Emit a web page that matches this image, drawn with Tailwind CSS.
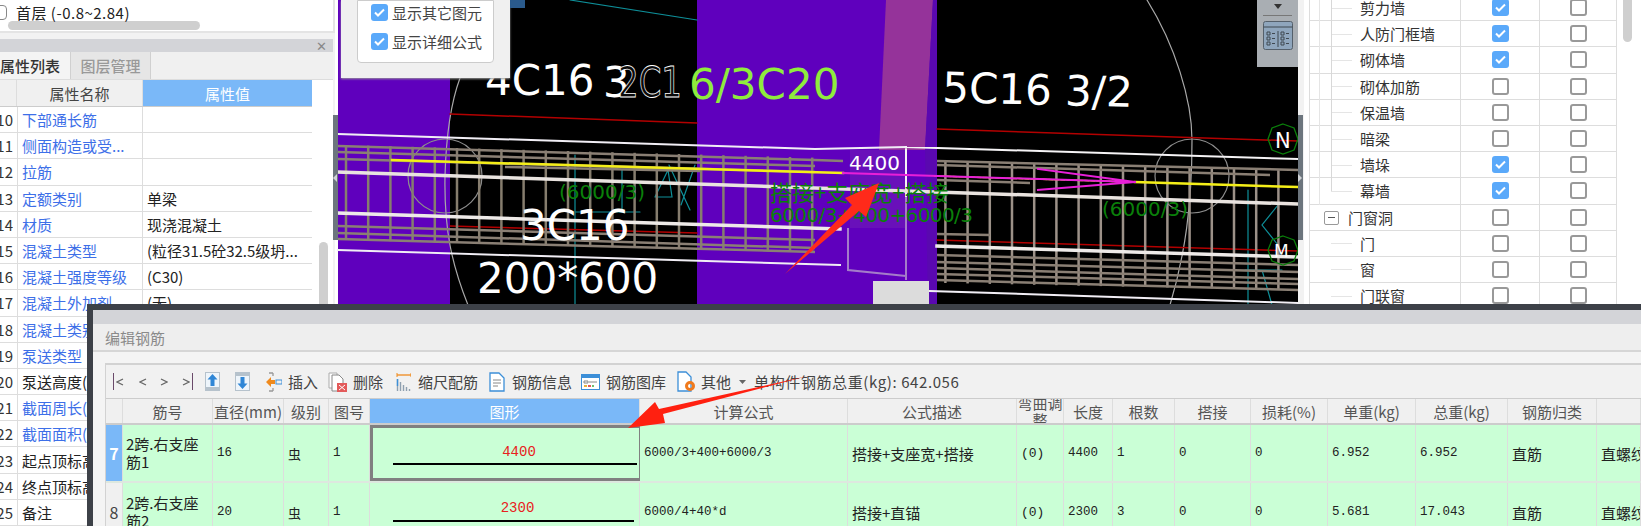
<!DOCTYPE html>
<html lang="zh">
<head>
<meta charset="UTF-8">
<title>编辑钢筋</title>
<script src="https://cdn.jsdelivr.net/npm/@tailwindcss/browser@4"></script>
</head>
<body class="bg-white">
<div class="relative flex w-[1641px] h-[526px] overflow-hidden bg-[#f2f2f2] text-[15px] leading-none text-[#333] font-['Noto_Sans_CJK_SC','Noto_Sans',sans-serif]">

  <!-- 左侧面板 -->
  <div class="w-[335px] shrink-0 flex flex-col">
    <div class="relative h-[35px] bg-white border-r-2 border-b-2 border-[#e4e4e4]">
      <div class="flex items-center h-[24px] -ml-[8px] gap-[9px]">
        <span class="w-[15px] h-[15px] border border-[#888] rounded-sm"></span>
        <span class="text-[#222] whitespace-nowrap tracking-[0.5px]">首层 (-0.8~2.84)</span>
      </div>
      <div class="-mt-[3px] ml-[8px] w-[192px] h-[9px] rounded-full bg-[#cfcfcf]"></div>
    </div>
    <div class="h-[6px]"></div>
    <div class="h-[14px] bg-[#d3d4d8] flex items-center justify-end pr-[6px] mr-[2px] text-[#888] text-[13px]">✕</div>
    <div class="flex h-[29px] mr-[2px] bg-[#f0f0f0] border-b border-[#ddd]">
      <div class="w-[70px] flex items-center justify-end pr-[10px] bg-[#f4f4f4] text-[#333] font-medium whitespace-nowrap">属性列表</div>
      <div class="w-[81px] flex items-center justify-center bg-[#e6e6e6] border-x border-[#d0d0d0] text-[#999] font-medium">图层管理</div>
    </div>
    <div class="relative flex-1 bg-white mr-[2px]">
      <div class="flex h-[27px] bg-[#f0f0f0] w-[312px] border-b border-[#ccc]">
        <div class="w-[17px] border-r border-[#ddd]"></div>
        <div class="w-[126px] flex items-center justify-center border-r border-[#ddd] text-[#444]">属性名称</div>
        <div class="flex-1 flex items-center justify-center bg-[#7ab8f8] text-white">属性值</div>
      </div>
      <div class="w-[312px] text-[#3d6fe8]">
        <div class="flex h-[26.2px] items-center border-b border-[#ddd]"><span class="w-[13px] text-right text-[#333] overflow-hidden whitespace-nowrap [direction:rtl]">10</span><span class="w-[4px] self-stretch"></span><span class="w-[126px] self-stretch flex items-center pl-[4px] border-x border-[#ddd]">下部通长筋</span><span class="pl-[4px] text-[#222]"></span></div>
        <div class="flex h-[26.2px] items-center border-b border-[#ddd]"><span class="w-[13px] text-right text-[#333] overflow-hidden whitespace-nowrap [direction:rtl]">11</span><span class="w-[4px] self-stretch"></span><span class="w-[126px] self-stretch flex items-center pl-[4px] border-x border-[#ddd]">侧面构造或受...</span><span class="pl-[4px] text-[#222]"></span></div>
        <div class="flex h-[26.2px] items-center border-b border-[#ddd]"><span class="w-[13px] text-right text-[#333] overflow-hidden whitespace-nowrap [direction:rtl]">12</span><span class="w-[4px] self-stretch"></span><span class="w-[126px] self-stretch flex items-center pl-[4px] border-x border-[#ddd]">拉筋</span><span class="pl-[4px] text-[#222]"></span></div>
        <div class="flex h-[26.2px] items-center border-b border-[#ddd]"><span class="w-[13px] text-right text-[#333] overflow-hidden whitespace-nowrap [direction:rtl]">13</span><span class="w-[4px] self-stretch"></span><span class="w-[126px] self-stretch flex items-center pl-[4px] border-x border-[#ddd]">定额类别</span><span class="pl-[4px] text-[#222]">单梁</span></div>
        <div class="flex h-[26.2px] items-center border-b border-[#ddd]"><span class="w-[13px] text-right text-[#333] overflow-hidden whitespace-nowrap [direction:rtl]">14</span><span class="w-[4px] self-stretch"></span><span class="w-[126px] self-stretch flex items-center pl-[4px] border-x border-[#ddd]">材质</span><span class="pl-[4px] text-[#222]">现浇混凝土</span></div>
        <div class="flex h-[26.2px] items-center border-b border-[#ddd]"><span class="w-[13px] text-right text-[#333] overflow-hidden whitespace-nowrap [direction:rtl]">15</span><span class="w-[4px] self-stretch"></span><span class="w-[126px] self-stretch flex items-center pl-[4px] border-x border-[#ddd]">混凝土类型</span><span class="pl-[4px] text-[#222] whitespace-nowrap">(粒径31.5砼32.5级坍...</span></div>
        <div class="flex h-[26.2px] items-center border-b border-[#ddd]"><span class="w-[13px] text-right text-[#333] overflow-hidden whitespace-nowrap [direction:rtl]">16</span><span class="w-[4px] self-stretch"></span><span class="w-[126px] self-stretch flex items-center pl-[4px] border-x border-[#ddd]">混凝土强度等级</span><span class="pl-[4px] text-[#222]">(C30)</span></div>
        <div class="flex h-[26.2px] items-center border-b border-[#ddd]"><span class="w-[13px] text-right text-[#333] overflow-hidden whitespace-nowrap [direction:rtl]">17</span><span class="w-[4px] self-stretch"></span><span class="w-[126px] self-stretch flex items-center pl-[4px] border-x border-[#ddd]">混凝土外加剂</span><span class="pl-[4px] text-[#222]">(无)</span></div>
        <div class="flex h-[26.2px] items-center border-b border-[#ddd]"><span class="w-[13px] text-right text-[#333] overflow-hidden whitespace-nowrap [direction:rtl]">18</span><span class="w-[4px] self-stretch"></span><span class="w-[126px] self-stretch flex items-center pl-[4px] border-x border-[#ddd]">混凝土类别</span></div>
        <div class="flex h-[26.2px] items-center border-b border-[#ddd]"><span class="w-[13px] text-right text-[#333] overflow-hidden whitespace-nowrap [direction:rtl]">19</span><span class="w-[4px] self-stretch"></span><span class="w-[126px] self-stretch flex items-center pl-[4px] border-x border-[#ddd]">泵送类型</span></div>
        <div class="flex h-[26.2px] items-center border-b border-[#ddd]"><span class="w-[13px] text-right text-[#333] overflow-hidden whitespace-nowrap [direction:rtl]">20</span><span class="w-[4px] self-stretch"></span><span class="w-[126px] self-stretch flex items-center pl-[4px] border-x border-[#ddd] text-[#222] whitespace-nowrap">泵送高度(m)</span></div>
        <div class="flex h-[26.2px] items-center border-b border-[#ddd]"><span class="w-[13px] text-right text-[#333] overflow-hidden whitespace-nowrap [direction:rtl]">21</span><span class="w-[4px] self-stretch"></span><span class="w-[126px] self-stretch flex items-center pl-[4px] border-x border-[#ddd] whitespace-nowrap">截面周长(m)</span></div>
        <div class="flex h-[26.2px] items-center border-b border-[#ddd]"><span class="w-[13px] text-right text-[#333] overflow-hidden whitespace-nowrap [direction:rtl]">22</span><span class="w-[4px] self-stretch"></span><span class="w-[126px] self-stretch flex items-center pl-[4px] border-x border-[#ddd] whitespace-nowrap">截面面积(m²)</span></div>
        <div class="flex h-[26.2px] items-center border-b border-[#ddd]"><span class="w-[13px] text-right text-[#333] overflow-hidden whitespace-nowrap [direction:rtl]">23</span><span class="w-[4px] self-stretch"></span><span class="w-[126px] self-stretch flex items-center pl-[4px] border-x border-[#ddd] text-[#222] whitespace-nowrap">起点顶标高(m)</span></div>
        <div class="flex h-[26.2px] items-center border-b border-[#ddd]"><span class="w-[13px] text-right text-[#333] overflow-hidden whitespace-nowrap [direction:rtl]">24</span><span class="w-[4px] self-stretch"></span><span class="w-[126px] self-stretch flex items-center pl-[4px] border-x border-[#ddd] text-[#222] whitespace-nowrap">终点顶标高(m)</span></div>
        <div class="flex h-[26.2px] items-center border-b border-[#ddd]"><span class="w-[13px] text-right text-[#333] overflow-hidden whitespace-nowrap [direction:rtl]">25</span><span class="w-[4px] self-stretch"></span><span class="w-[126px] self-stretch flex items-center pl-[4px] border-x border-[#ddd] text-[#222]">备注</span></div>
      </div>
      <div class="absolute left-[319px] top-[162px] w-[9px] h-[200px] rounded-full bg-[#cfcfcf]"></div>
    </div>
  </div>

  <!-- 绘图区 -->
  <div class="relative w-[963px] shrink-0 bg-black">
    <svg width="963" height="305" viewBox="335 0 963 305" class="block font-['DejaVu_Sans',sans-serif]">
      <rect x="335" y="0" width="3" height="305" fill="#fff"/>
      <rect x="338" y="0" width="112" height="305" fill="#5f00bd"/>
      <rect x="697" y="0" width="240" height="305" fill="#5f00bd"/>
      <polygon points="886,0 933,0 925,150 879,150" fill="#95339a"/>
      <polygon points="933,0 937,0 937,305 928,305 925,150" fill="#5a08b0"/>
      <rect x="850" y="150" width="56" height="78" fill="#7420b8" opacity=".5"/>
      <g fill="none" stroke-linecap="round">
        <path d="M460 78C450 105 446 140 445 176C444 230 452 265 468 305" stroke="#a9a9a9" stroke-width="1.2"/>
        <path d="M1147 0C1175 45 1192 100 1192 140C1192 205 1185 255 1170 305" stroke="#a9a9a9" stroke-width="1.2"/>
        <circle cx="445" cy="176" r="37" stroke="#8d8d8d" stroke-width="1.2"/>
        <circle cx="1192" cy="176" r="37" stroke="#8d8d8d" stroke-width="1.2"/>
        <path d="M570 0L697 20M575 155V305M590 156V212M575 212H640M622 170V212M655 197H672L668 170L655 197M669 165L690 210M695 165L681 205M1248 190V305M1278 205L1262 225L1278 245M1245 270H1282M1262 270L1272 305" stroke="#0e8f99" stroke-width="1.2"/>
        <path d="M450 114L697 123M937 129L1298 141M450 226L697 233M937 240L1298 251" stroke="#b30000" stroke-width="1.5"/>
      </g>
      <g id="stirrups" stroke-width="2.5"></g>
      <g fill="none" stroke="#8a7f74" stroke-width="2.5">
        <path d="M338 146L815 160M338 152L815 166M338 159L815 172M505 167L700 171M338 226L815 240M338 233L815 248M338 239L815 252M815 160L843 161"/>
        <path d="M937 161L1298 170M937 165L1270 175M937 180L1030 183M937 234L990 235M937 255L1298 265M937 262L1298 272M937 268L1298 279M937 274L1298 284M937 280L1298 290"/>
        <path d="M848 228V270L906 276M906 195V280" stroke="#a47cc9" stroke-width="2"/>
      </g>
      <g fill="none" stroke-linecap="square">
        <path d="M338 134L815 149L906 147" stroke="#f1eef5" stroke-width="2"/>
        <path d="M906 147L1298 159M906 147V196" stroke="#f5f3f5" stroke-width="2"/>
        <path d="M338 172L1298 204" stroke="#e9e3df" stroke-width="3.5"/>
        <path d="M338 213L840 229M937 246L1298 257" stroke="#eeeae8" stroke-width="3.5"/>
        <path d="M338 250L840 265M930 291L1298 303" stroke="#f1eef5" stroke-width="2"/>
        <path d="M392 160L843 173" stroke="#f4ee18" stroke-width="2.5"/>
        <path d="M935 176L1130 182" stroke="#f4ee18" stroke-width="1.5" stroke-dasharray="4 2"/>
        <path d="M1135 182L1298 187" stroke="#f4ee18" stroke-width="2.5"/>
        <path d="M843 173L1135 182M1038 169L1135 182L1038 190" stroke="#e81fd8" stroke-width="2"/>
      </g>
      <rect x="873" y="281" width="56" height="24" fill="#dcdcdc"/>
      <text x="485" y="95" fill="#fff" font-size="42">4C16</text>
      <text x="603" y="97" fill="#fff" font-size="42">3</text>
      <text x="618" y="97" fill="#0a0a0a" stroke="#fff" stroke-width=".8" font-size="42" textLength="64" lengthAdjust="spacingAndGlyphs">2C1</text>
      <text x="689" y="99" fill="#8fec3c" font-size="42">6/3C20</text>
      <text x="942" y="102" fill="#fff" font-size="42" transform="rotate(1.5 942 102)">5C16 3/2</text>
      <text x="520" y="240" fill="#fff" font-size="42">3C16</text>
      <text x="477" y="293" fill="#fff" font-size="42">200*600</text>
      <text x="849" y="170" fill="#fff" font-size="20">4400</text>
      <text x="559" y="199" fill="#0a800a" font-size="20">(6000/3)</text>
      <text x="1102" y="216" fill="#0a800a" font-size="20">(6000/3)</text>
      <text x="770" y="201" fill="#0a800a" font-size="22" class="font-['Noto_Sans_CJK_SC',sans-serif]">搭接+支座宽+搭接</text>
      <text x="770" y="222" fill="#0a800a" font-size="20" textLength="203" lengthAdjust="spacing">6000/3+400+6000/3</text>
      <polygon points="1283,124 1294,128 1298,139 1294,150 1283,154 1272,150 1268,139 1272,128" fill="none" stroke="#0a800a" stroke-width="1.3"/>
      <text x="1275" y="148" fill="#fff" font-size="21">N</text>
      <polygon points="1283,236 1294,240 1298,250 1294,261 1283,265 1272,261 1268,250 1272,240" fill="none" stroke="#0a800a" stroke-width="1.3"/>
      <text x="1274" y="257" fill="#fff" font-size="17">M</text>
      <polygon points="785,274 852,205 845,198 879,183 866,217 859,211" fill="#ff2a1a"/>
    </svg>

    <!-- 显示选项弹窗 -->
    <div class="absolute left-[6px] top-0 w-[169px] h-[78px] bg-[#f0f0f0] shadow-[0_1px_2px_#999]">
      <div class="ml-[16px] w-[137px] h-[63px] bg-white border border-[#ccc] rounded-b-[4px] flex flex-col pl-[13px] pt-[3px] gap-[12px] text-[#444]">
        <div class="flex items-center gap-[4px] h-[17px]"><span class="w-[17px] h-[17px] rounded-[3px] bg-[#5aa9fa] flex items-center justify-center"><svg width="11" height="9" viewBox="0 0 11 9"><path d="M1 4.500L4 7.500L10 1.500" fill="none" stroke="#fff" stroke-width="2"/></svg></span><span class="whitespace-nowrap">显示其它图元</span></div>
        <div class="flex items-center gap-[4px] h-[17px]"><span class="w-[17px] h-[17px] rounded-[3px] bg-[#5aa9fa] flex items-center justify-center"><svg width="11" height="9" viewBox="0 0 11 9"><path d="M1 4.500L4 7.500L10 1.500" fill="none" stroke="#fff" stroke-width="2"/></svg></span><span class="whitespace-nowrap">显示详细公式</span></div>
      </div>
    </div>
    <div class="absolute left-[175px] top-0 w-[15px] h-[8px] bg-[#2a5a8c]"></div>

    <!-- 右上工具条 -->
    <div class="absolute right-0 top-0 w-[41px] h-[67px] bg-[#a9aeb3] flex flex-col items-center">
      <svg width="8" height="5" viewBox="0 0 8 5" class="mt-[4px]"><path d="M0 0H8L4 5Z" fill="#333"/></svg>
      <div class="w-[29px] h-px bg-[#777] mt-[6px]"></div>
      <svg width="30" height="29" viewBox="0 0 30 29" class="mt-[5px]">
        <rect x=".5" y=".5" width="29" height="28" rx="2" fill="#8fa6bd" stroke="#55606b"/>
        <path d="M.5 6H29.500M15 10V26" stroke="#3f4850"/>
        <path d="M4 11h3v3H4zM4 16h3v3H4zM4 21h3v3H4zM18 11h3v3h-3zM18 16h3v3h-3zM18 21h3v3h-3z" fill="none" stroke="#3f4850"/>
        <path d="M9 12.500h3M9 17.500h3M9 22.500h3M23 12.500h3M23 17.500h3M23 22.500h3" stroke="#3f4850"/>
      </svg>
    </div>

    <!-- 两侧拖动条 -->
    <div class="absolute -left-[2px] top-[115px] w-[5px] h-[125px] bg-[#6c757d] flex items-center"><svg width="4" height="8" viewBox="0 0 4 8"><path d="M4 0V8L0 4Z" fill="#cfd3d6"/></svg></div>
    <div class="absolute -right-[5px] top-[115px] z-10 w-[5px] h-[125px] bg-[#6c757d] flex items-center"><svg width="4" height="8" viewBox="0 0 4 8"><path d="M0 0V8L4 4Z" fill="#cfd3d6"/></svg></div>
  </div>

  <!-- 右侧面板 -->
  <div class="flex-1 relative bg-white pl-[5px] border-l-[6px] border-[#f2f2f2]">
    <div class="-mt-[5px] w-[308px] border-l border-[#ddd] text-[#333]">
      <div class="relative flex items-center h-[26.2px] border-b border-[#ddd]"><span class="absolute left-[21px] top-1/2 w-[21px] border-t border-[#e5e5e5]"></span><span class="w-[150px] pl-[50px] whitespace-nowrap">剪力墙</span><span class="w-[79px] h-full flex items-center justify-center border-l border-[#ddd]"><span class="w-[17px] h-[17px] rounded-[3px] bg-[#5aa9fa] flex items-center justify-center"><svg width="11" height="9" viewBox="0 0 11 9"><path d="M1 4.500L4 7.500L10 1.500" fill="none" stroke="#fff" stroke-width="2"/></svg></span></span><span class="w-[78px] h-full flex items-center justify-center border-x border-[#ddd]"><span class="w-[17px] h-[17px] rounded-[3px] border-2 border-[#999] bg-white"></span></span></div>
      <div class="relative flex items-center h-[26.2px] border-b border-[#ddd]"><span class="absolute left-[21px] top-1/2 w-[21px] border-t border-[#e5e5e5]"></span><span class="w-[150px] pl-[50px] whitespace-nowrap">人防门框墙</span><span class="w-[79px] h-full flex items-center justify-center border-l border-[#ddd]"><span class="w-[17px] h-[17px] rounded-[3px] bg-[#5aa9fa] flex items-center justify-center"><svg width="11" height="9" viewBox="0 0 11 9"><path d="M1 4.500L4 7.500L10 1.500" fill="none" stroke="#fff" stroke-width="2"/></svg></span></span><span class="w-[78px] h-full flex items-center justify-center border-x border-[#ddd]"><span class="w-[17px] h-[17px] rounded-[3px] border-2 border-[#999] bg-white"></span></span></div>
      <div class="relative flex items-center h-[26.2px] border-b border-[#ddd]"><span class="absolute left-[21px] top-1/2 w-[21px] border-t border-[#e5e5e5]"></span><span class="w-[150px] pl-[50px] whitespace-nowrap">砌体墙</span><span class="w-[79px] h-full flex items-center justify-center border-l border-[#ddd]"><span class="w-[17px] h-[17px] rounded-[3px] bg-[#5aa9fa] flex items-center justify-center"><svg width="11" height="9" viewBox="0 0 11 9"><path d="M1 4.500L4 7.500L10 1.500" fill="none" stroke="#fff" stroke-width="2"/></svg></span></span><span class="w-[78px] h-full flex items-center justify-center border-x border-[#ddd]"><span class="w-[17px] h-[17px] rounded-[3px] border-2 border-[#999] bg-white"></span></span></div>
      <div class="relative flex items-center h-[26.2px] border-b border-[#ddd]"><span class="absolute left-[21px] top-1/2 w-[21px] border-t border-[#e5e5e5]"></span><span class="w-[150px] pl-[50px] whitespace-nowrap">砌体加筋</span><span class="w-[79px] h-full flex items-center justify-center border-l border-[#ddd]"><span class="w-[17px] h-[17px] rounded-[3px] border-2 border-[#999] bg-white"></span></span><span class="w-[78px] h-full flex items-center justify-center border-x border-[#ddd]"><span class="w-[17px] h-[17px] rounded-[3px] border-2 border-[#999] bg-white"></span></span></div>
      <div class="relative flex items-center h-[26.2px] border-b border-[#ddd]"><span class="absolute left-[21px] top-1/2 w-[21px] border-t border-[#e5e5e5]"></span><span class="w-[150px] pl-[50px] whitespace-nowrap">保温墙</span><span class="w-[79px] h-full flex items-center justify-center border-l border-[#ddd]"><span class="w-[17px] h-[17px] rounded-[3px] border-2 border-[#999] bg-white"></span></span><span class="w-[78px] h-full flex items-center justify-center border-x border-[#ddd]"><span class="w-[17px] h-[17px] rounded-[3px] border-2 border-[#999] bg-white"></span></span></div>
      <div class="relative flex items-center h-[26.2px] border-b border-[#ddd]"><span class="absolute left-[21px] top-1/2 w-[21px] border-t border-[#e5e5e5]"></span><span class="w-[150px] pl-[50px] whitespace-nowrap">暗梁</span><span class="w-[79px] h-full flex items-center justify-center border-l border-[#ddd]"><span class="w-[17px] h-[17px] rounded-[3px] border-2 border-[#999] bg-white"></span></span><span class="w-[78px] h-full flex items-center justify-center border-x border-[#ddd]"><span class="w-[17px] h-[17px] rounded-[3px] border-2 border-[#999] bg-white"></span></span></div>
      <div class="relative flex items-center h-[26.2px] border-b border-[#ddd]"><span class="absolute left-[21px] top-1/2 w-[21px] border-t border-[#e5e5e5]"></span><span class="w-[150px] pl-[50px] whitespace-nowrap">墙垛</span><span class="w-[79px] h-full flex items-center justify-center border-l border-[#ddd]"><span class="w-[17px] h-[17px] rounded-[3px] bg-[#5aa9fa] flex items-center justify-center"><svg width="11" height="9" viewBox="0 0 11 9"><path d="M1 4.500L4 7.500L10 1.500" fill="none" stroke="#fff" stroke-width="2"/></svg></span></span><span class="w-[78px] h-full flex items-center justify-center border-x border-[#ddd]"><span class="w-[17px] h-[17px] rounded-[3px] border-2 border-[#999] bg-white"></span></span></div>
      <div class="relative flex items-center h-[26.2px] border-b border-[#ddd]"><span class="absolute left-[21px] top-1/2 w-[21px] border-t border-[#e5e5e5]"></span><span class="w-[150px] pl-[50px] whitespace-nowrap">幕墙</span><span class="w-[79px] h-full flex items-center justify-center border-l border-[#ddd]"><span class="w-[17px] h-[17px] rounded-[3px] bg-[#5aa9fa] flex items-center justify-center"><svg width="11" height="9" viewBox="0 0 11 9"><path d="M1 4.500L4 7.500L10 1.500" fill="none" stroke="#fff" stroke-width="2"/></svg></span></span><span class="w-[78px] h-full flex items-center justify-center border-x border-[#ddd]"><span class="w-[17px] h-[17px] rounded-[3px] border-2 border-[#999] bg-white"></span></span></div>
      <div class="relative flex items-center h-[26.2px] border-b border-[#ddd]"><span class="absolute left-[14px] top-[6px] w-[15px] h-[14px] border border-[#999] rounded-[2px] flex items-center justify-center"><span class="w-[7px] h-px bg-[#555]"></span></span><span class="w-[150px] pl-[38px] whitespace-nowrap">门窗洞</span><span class="w-[79px] h-full flex items-center justify-center border-l border-[#ddd]"><span class="w-[17px] h-[17px] rounded-[3px] border-2 border-[#999] bg-white"></span></span><span class="w-[78px] h-full flex items-center justify-center border-x border-[#ddd]"><span class="w-[17px] h-[17px] rounded-[3px] border-2 border-[#999] bg-white"></span></span></div>
      <div class="relative flex items-center h-[26.2px] border-b border-[#ddd]"><span class="absolute left-[21px] top-1/2 w-[21px] border-t border-[#e5e5e5]"></span><span class="w-[150px] pl-[50px] whitespace-nowrap">门</span><span class="w-[79px] h-full flex items-center justify-center border-l border-[#ddd]"><span class="w-[17px] h-[17px] rounded-[3px] border-2 border-[#999] bg-white"></span></span><span class="w-[78px] h-full flex items-center justify-center border-x border-[#ddd]"><span class="w-[17px] h-[17px] rounded-[3px] border-2 border-[#999] bg-white"></span></span></div>
      <div class="relative flex items-center h-[26.2px] border-b border-[#ddd]"><span class="absolute left-[21px] top-1/2 w-[21px] border-t border-[#e5e5e5]"></span><span class="w-[150px] pl-[50px] whitespace-nowrap">窗</span><span class="w-[79px] h-full flex items-center justify-center border-l border-[#ddd]"><span class="w-[17px] h-[17px] rounded-[3px] border-2 border-[#999] bg-white"></span></span><span class="w-[78px] h-full flex items-center justify-center border-x border-[#ddd]"><span class="w-[17px] h-[17px] rounded-[3px] border-2 border-[#999] bg-white"></span></span></div>
      <div class="relative flex items-center h-[26.2px] border-b border-[#ddd]"><span class="absolute left-[21px] top-1/2 w-[21px] border-t border-[#e5e5e5]"></span><span class="w-[150px] pl-[50px] whitespace-nowrap">门联窗</span><span class="w-[79px] h-full flex items-center justify-center border-l border-[#ddd]"><span class="w-[17px] h-[17px] rounded-[3px] border-2 border-[#999] bg-white"></span></span><span class="w-[78px] h-full flex items-center justify-center border-x border-[#ddd]"><span class="w-[17px] h-[17px] rounded-[3px] border-2 border-[#999] bg-white"></span></span></div>
    </div>
    <div class="absolute left-[15px] top-0 h-[205px] border-l border-[#e5e5e5]"></div>
    <div class="absolute left-[27px] top-0 h-[191px] border-l border-[#d8d8d8]"></div>
    <div class="absolute right-[9px] top-0 w-[9px] h-[42px] rounded-b-full bg-[#cfcfcf]"></div>
  </div>

  <!-- 编辑钢筋 对话框 -->
  <div class="absolute z-20 left-[87px] top-[304px] right-0 bottom-0 bg-[#f4f4f4] border-l-[6px] border-t-[6px] border-[#3d4148] flex flex-col">
    <div class="h-[14px] shrink-0 bg-[#d3d4d8]"></div>
    <div class="h-[28px] shrink-0 bg-[#eeeeee] border-b-2 border-[#d6d6d6] flex items-center pl-[12px] text-[#8a8a8a]">编辑钢筋</div>
    <div class="h-[11px] shrink-0"></div>
    <div class="flex-1 ml-[12px] border-l border-t-2 border-[#d2d2d2] bg-[#f1f1f1] min-h-0">
      <div class="h-[33px] flex items-center text-[#444] whitespace-nowrap">
        <span class="ml-[7px] w-[12px] flex items-center text-[#555]"><span class="w-px h-[17px] bg-[#6a4a6a] mr-[2px]"></span><svg width="8" height="8" viewBox="0 0 8 8"><path d="M7 1L1 4L7 7" fill="none" stroke="#666" stroke-width="1.300"/></svg></span>
        <svg width="8" height="8" viewBox="0 0 8 8" class="ml-[14px]"><path d="M7 1L1 4L7 7" fill="none" stroke="#666" stroke-width="1.300"/></svg>
        <svg width="8" height="8" viewBox="0 0 8 8" class="ml-[13px]"><path d="M1 1L7 4L1 7" fill="none" stroke="#666" stroke-width="1.300"/></svg>
        <span class="ml-[14px] flex items-center"><svg width="8" height="8" viewBox="0 0 8 8"><path d="M1 1L7 4L1 7" fill="none" stroke="#666" stroke-width="1.300"/></svg><span class="w-px h-[17px] bg-[#6a4a6a] ml-[2px]"></span></span>
        <svg width="15" height="19" viewBox="0 0 15 19" class="ml-[12px]"><rect width="15" height="19" fill="#b6c2cc"/><rect x="1" y="1" width="13" height="14" fill="#eef5fb"/><path d="M7.500 2L12.500 7.500H9.500V14H5.500V7.500H2.500Z" fill="#2f86d6"/></svg>
        <svg width="15" height="19" viewBox="0 0 15 19" class="ml-[15px]"><rect width="15" height="19" fill="#b6c2cc"/><rect x="1" y="4" width="13" height="14" fill="#eef5fb"/><path d="M7.500 17L12.500 11.500H9.500V5H5.500V11.500H2.500Z" fill="#2f86d6"/></svg>
        <svg width="17" height="20" viewBox="0 0 17 20" class="ml-[15px]"><path d="M4 1H8M8 1V4M4 19H8M8 19V16" fill="none" stroke="#999" stroke-width="1.300"/><path d="M1 10L6 5V8H10V12H6V15Z" fill="#f08a1d"/><rect x="11" y="8" width="6" height="4" fill="none" stroke="#3c8fd8"/></svg>
        <span class="ml-[6px]">插入</span>
        <svg width="19" height="20" viewBox="0 0 19 20" class="ml-[10px]"><path d="M1 1H9V16H1Z" fill="#fff" stroke="#aaa"/><path d="M4 3H11L15 7V19H4Z" fill="#fff" stroke="#888"/><rect x="9" y="11" width="10" height="9" fill="#e35a5a"/><path d="M11 13L17 18M17 13L11 18" stroke="#fff"/></svg>
        <span class="ml-[6px]">删除</span>
        <svg width="15" height="20" viewBox="0 0 15 20" class="ml-[13px]"><path d="M1 3H15" stroke="#f08a1d" stroke-width="1.300"/><path d="M1 1V5M15 1V5" stroke="#f08a1d"/><path d="M1.500 7V19M4.500 10V19M7.500 13V19M10.500 15V19M13.500 17V19" stroke="#8fa0b0" stroke-width="1.400"/><path d="M1.500 7V14" stroke="#3c8fd8" stroke-width="1.400"/></svg>
        <span class="ml-[7px]">缩尺配筋</span>
        <svg width="16" height="20" viewBox="0 0 16 20" class="ml-[11px]"><path d="M1 1H10L15 6V19H1Z" fill="#fff" stroke="#3c8fd8" stroke-width="1.300"/><path d="M4 8H12M4 11H12M4 14H9" stroke="#888"/></svg>
        <span class="ml-[7px]">钢筋信息</span>
        <svg width="19" height="16" viewBox="0 0 19 16" class="ml-[9px]"><rect x=".5" y=".5" width="18" height="15" fill="#fff" stroke="#3c8fd8"/><rect x="1" y="1" width="17" height="3" fill="#3c8fd8"/><path d="M3 7H7V9H3ZM8 8H16" fill="none" stroke="#888"/><path d="M3 12H6" stroke="#e8b13c" stroke-width="2"/><path d="M7 12H10" stroke="#e35a5a" stroke-width="2"/><path d="M11 12H13" stroke="#6fbf6f" stroke-width="2"/></svg>
        <span class="ml-[6px]">钢筋图库</span>
        <svg width="20" height="22" viewBox="0 0 20 22" class="ml-[11px]"><path d="M1 1H9L14 6V20H1Z" fill="#fff" stroke="#3c8fd8" stroke-width="1.300"/><circle cx="13" cy="15" r="3.500" fill="none" stroke="#f07a1d" stroke-width="3"/></svg>
        <span class="ml-[4px]">其他</span>
        <svg width="7" height="4" viewBox="0 0 7 4" class="ml-[8px]"><path d="M0 0H7L3.500 4Z" fill="#666"/></svg>
        <span class="ml-[8px] tracking-[0.6px]">单构件钢筋总重(kg): 642.056</span>
      </div>

      <div class="grid grid-cols-[17px_90px_71px_45px_41px_270px_208px_169px_47px_49px_62px_76px_77px_88px_92px_89px_1fr] h-[27px] bg-[#f0f0f0] border-t border-[#ccc] border-b-2 border-b-[#ccc] text-[#555] *:flex *:items-center *:justify-center *:border-r *:border-[#ddd] *:overflow-hidden *:whitespace-nowrap">
        <div></div><div>筋号</div><div>直径(mm)</div><div>级别</div><div>图号</div><div class="!text-white bg-[#7ab8f8]">图形</div><div>计算公式</div><div>公式描述</div><div class="!whitespace-normal text-center leading-[17px]">弯曲调整</div><div>长度</div><div>根数</div><div>搭接</div><div>损耗(%)</div><div>单重(kg)</div><div>总重(kg)</div><div>钢筋归类</div><div></div>
      </div>

      <div class="grid grid-cols-[17px_90px_71px_45px_41px_270px_208px_169px_47px_49px_62px_76px_77px_88px_92px_89px_1fr] h-[58px] bg-[#caffd6] border-b-2 border-[#dde8df] text-[#222] *:flex *:items-center *:border-r *:border-[#ddd] *:overflow-hidden *:whitespace-nowrap *:pl-[4px]">
        <div class="!pl-0 justify-center bg-[#7ab8f8] text-white font-bold text-[16px]">7</div>
        <div class="!whitespace-normal leading-[18px] !pl-[3px]">2跨.右支座<br>筋1</div>
        <div class="font-['Liberation_Mono',monospace] text-[12.5px]">16</div>
        <div class="pl-[6px] text-[13px]">虫</div>
        <div class="font-['Liberation_Mono',monospace] text-[12.5px]">1</div>
        <div class="border-[3px] !border-[#808080] !pl-0 !block">
          <div class="text-center text-[#e82020] font-['Liberation_Mono',monospace] text-[14px] pl-[26px] mt-[16px] leading-[16px]">4400</div>
          <div class="ml-[20px] mr-[2px] mt-[3px] h-[2px] bg-black"></div>
        </div>
        <div class="font-['Liberation_Mono',monospace] text-[12.5px]">6000/3+400+6000/3</div>
        <div>搭接+支座宽+搭接</div>
        <div class="font-['Liberation_Mono',monospace] text-[13px]">(0)</div>
        <div class="font-['Liberation_Mono',monospace] text-[12.5px]">4400</div>
        <div class="font-['Liberation_Mono',monospace] text-[12.5px]">1</div>
        <div class="font-['Liberation_Mono',monospace] text-[12.5px]">0</div>
        <div class="font-['Liberation_Mono',monospace] text-[12.5px]">0</div>
        <div class="font-['Liberation_Mono',monospace] text-[12.5px]">6.952</div>
        <div class="font-['Liberation_Mono',monospace] text-[12.5px]">6.952</div>
        <div>直筋</div>
        <div>直螺纹连接</div>
      </div>

      <div class="grid grid-cols-[17px_90px_71px_45px_41px_270px_208px_169px_47px_49px_62px_76px_77px_88px_92px_89px_1fr] h-[58px] bg-[#caffd6] text-[#222] *:flex *:items-center *:border-r *:border-[#ddd] *:overflow-hidden *:whitespace-nowrap *:pl-[4px]">
        <div class="!pl-0 justify-center bg-[#f0f0f0] text-[#444] text-[16px]">8</div>
        <div class="!whitespace-normal leading-[18px] !pl-[3px]">2跨.右支座<br>筋2</div>
        <div class="font-['Liberation_Mono',monospace] text-[12.5px]">20</div>
        <div class="pl-[6px] text-[13px]">虫</div>
        <div class="font-['Liberation_Mono',monospace] text-[12.5px]">1</div>
        <div class="!pl-0 !block">
          <div class="text-center text-[#e82020] font-['Liberation_Mono',monospace] text-[14px] pl-[26px] mt-[17px] leading-[16px]">2300</div>
          <div class="ml-[23px] mr-[5px] mt-[4px] h-[2px] bg-black"></div>
        </div>
        <div class="font-['Liberation_Mono',monospace] text-[12.5px]">6000/4+40*d</div>
        <div>搭接+直锚</div>
        <div class="font-['Liberation_Mono',monospace] text-[13px]">(0)</div>
        <div class="font-['Liberation_Mono',monospace] text-[12.5px]">2300</div>
        <div class="font-['Liberation_Mono',monospace] text-[12.5px]">3</div>
        <div class="font-['Liberation_Mono',monospace] text-[12.5px]">0</div>
        <div class="font-['Liberation_Mono',monospace] text-[12.5px]">0</div>
        <div class="font-['Liberation_Mono',monospace] text-[12.5px]">5.681</div>
        <div class="font-['Liberation_Mono',monospace] text-[12.5px]">17.043</div>
        <div>直筋</div>
        <div>直螺纹连接</div>
      </div>
    </div>
  </div>

  <!-- 红色箭头标注 -->
  <svg width="200" height="70" viewBox="620 365 200 70" class="absolute z-30 left-[620px] top-[365px]">
    <polygon points="808,376 663,414 665,423 628,428 655,402 659,409" fill="#ff2010"/>
  </svg>
</div>

<script>
  // 箍筋竖线
  (function () {
    var svgNs = 'http://www.w3.org/2000/svg';
    var group = document.getElementById('stirrups');
    for (var x = 346; x < 1298; x += 22.2) {
      if (x > 815 && x < 940) continue;
      var line = document.createElementNS(svgNs, 'line');
      var left = x < 840;
      line.setAttribute('x1', x);
      line.setAttribute('x2', x);
      line.setAttribute('y1', 145 + (x - 346) * 0.027);
      line.setAttribute('y2', left ? 240 + (x - 346) * 0.027 : 283 + (x - 946) * 0.02);
      line.setAttribute('stroke', left ? '#867d6e' : '#9c9188');
      group.appendChild(line);
    }
  })();
</script>
</body>
</html>
